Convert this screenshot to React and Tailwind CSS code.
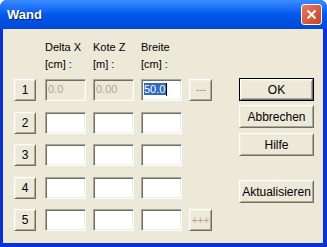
import React from "react";

const sunken =
  "h-[22px] w-[41px] border border-t-[#ACA899] border-l-[#ACA899] border-b-white border-r-white shadow-[inset_1px_1px_0_#716F64,inset_-1px_-1px_0_#F1EFE2]";

const raised =
  "border border-t-white border-l-white border-b-[#716F64] border-r-[#716F64] shadow-[inset_1px_1px_0_#F1EFE2,inset_-1px_-1px_0_#ACA899] bg-[#ECE9D8] flex items-center justify-center";

function Row({ n, first, last }) {
  return (
    <div className="flex items-center h-[22px]">
      <div className={`${raised} w-[22px] h-[22px] text-[12px] text-black`}>{n}</div>
      <div className="flex gap-[7px] ml-[9px]">
        {first ? (
          <>
            <div className={`${sunken} bg-[#ECE9D8] text-[#ACA899] pl-[2px] pt-[3px] leading-[13px]`}>0.0</div>
            <div className={`${sunken} bg-[#ECE9D8] text-[#ACA899] pl-[2px] pt-[3px] leading-[13px]`}>0.00</div>
            <div className={`${sunken} bg-white pl-[2px] pt-[3px] leading-[13px]`}>
              <span className="bg-[#316AC5] text-white pr-[1px]">50.0</span>
              <span className="inline-block w-[1px] h-[13px] bg-black align-top" />
            </div>
          </>
        ) : (
          <>
            <div className={`${sunken} bg-white`} />
            <div className={`${sunken} bg-white`} />
            <div className={`${sunken} bg-white`} />
          </>
        )}
      </div>
      {first && (
        <div className={`${raised} w-[23px] h-[22px] ml-[7px]`}>
          <span className="w-[10px] border-t border-dashed border-[#ACA899] mt-[1px]" />
        </div>
      )}
      {last && (
        <div className={`${raised} w-[23px] h-[22px] ml-[7px] text-[#ACA899] text-[10px]`}>+++</div>
      )}
    </div>
  );
}

function Btn({ label, def }) {
  if (def) {
    return (
      <div className="w-[75px] h-[23px] border border-black">
        <div className={`${raised} w-full h-full text-[12px] text-black`}>{label}</div>
      </div>
    );
  }
  return <div className={`${raised} w-[75px] h-[23px] text-[12px] text-black`}>{label}</div>;
}

export default function App() {
  return (
    <div
      className="w-[327px] h-[247px] bg-[#0831D9] rounded-t-[7px] flex flex-col overflow-hidden"
      style={{ fontFamily: '"Liberation Sans", Arial, sans-serif' }}
    >
      <div className="h-[29px] bg-gradient-to-b from-[#3A8CFF] via-[#0058EE] to-[#0048D8] flex items-center pl-[7px] pr-[5px] shrink-0">
        <span className="text-white font-bold text-[13px] [text-shadow:1px_1px_0_#0A246A]">Wand</span>
        <div className="ml-auto w-[21px] h-[21px] rounded-[3px] border border-white bg-gradient-to-br from-[#E87A5C] to-[#C8401E] flex items-center justify-center">
          <svg width="11" height="11" viewBox="0 0 11 11">
            <path d="M1.5 1.5 L9.5 9.5 M9.5 1.5 L1.5 9.5" stroke="white" strokeWidth="2" />
          </svg>
        </div>
      </div>
      <div className="flex-1 mx-[3px] mr-[4px] mb-[4px] bg-[#ECE9D8] flex text-[11px] text-black">
        <div className="pl-[11px] pt-[10px]">
          <div className="flex gap-[7px] ml-[31px] h-[40px]">
            {[["Delta X", "[cm] :"], ["Kote Z", "[m] :"], ["Breite", "[cm] :"]].map(([a, b]) => (
              <div key={a} className="w-[41px] leading-[17px]">
                <div>{a}</div>
                <div>{b}</div>
              </div>
            ))}
          </div>
          <div className="flex flex-col gap-[10.5px]">
            <Row n="1" first />
            <Row n="2" />
            <Row n="3" />
            <Row n="4" />
            <Row n="5" last />
          </div>
        </div>
        <div className="ml-auto mr-[9px] pt-[49px] flex flex-col">
          <Btn label="OK" def />
          <div className="h-[4px]" />
          <Btn label="Abbrechen" />
          <div className="h-[5px]" />
          <Btn label="Hilfe" />
          <div className="h-[24px]" />
          <Btn label="Aktualisieren" />
        </div>
      </div>
    </div>
  );
}
